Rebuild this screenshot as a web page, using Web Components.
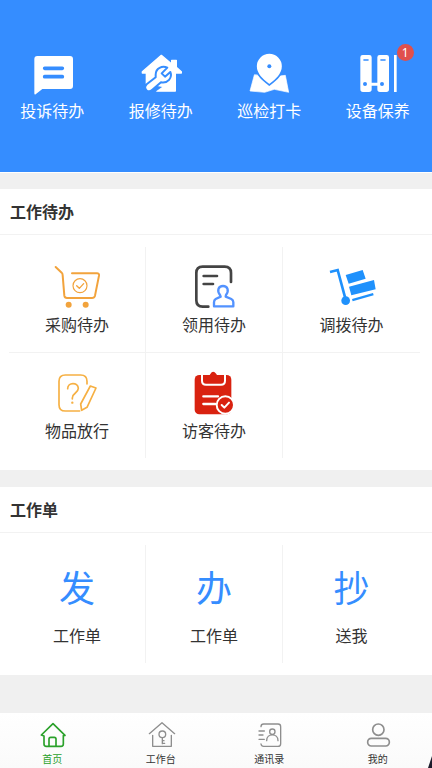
<!DOCTYPE html>
<html lang="zh-CN">
<head>
<meta charset="utf-8">
<meta name="viewport" content="width=device-width, initial-scale=1">
<title>工作待办</title>
<style>
  body { margin: 0; font-family: "Noto Sans CJK SC", "Liberation Sans", sans-serif; color: #333; }
  svg { display: block; width: 100%; height: 100%; fill: none; stroke-linecap: round; stroke-linejoin: round; }
</style>
</head>
<body>
<home-page>
  <hero-bar>
    <nav-tile>
      <svg slot="icon" viewBox="82 30 144 144"><path fill="#fff" d="M110 48h98q9 0 9 9v81q0 9-9 9h-83l-20 16q-4 2-4-3V57q0-9 9-9z"/><path stroke="#358dff" stroke-width="11" d="M132 85h53M132 110h53"/></svg>
      投诉待办
    </nav-tile>
    <nav-tile>
      <svg slot="icon" viewBox="0 0 144 144"><path fill="#fff" stroke="#fff" stroke-width="4" d="M73 16 16 65v4h12v54h87V69h18v-4l-15-13V31h-14v11z"/><path fill="#358dff" d="m16 131 8-30 52 10-20 15H16z"/><path fill="#fff" stroke="#fff" d="M82 108h32v15H60z"/><path stroke="#358dff" stroke-width="6" fill="#fff" d="M91 53C76 46 56 54 56 74v8L29 103c-12 12 4 29 16 17l27-23c20 4 35-14 28-31L84 80l-10-10z"/></svg>
      报修待办
    </nav-tile>
    <nav-tile>
      <svg slot="icon" viewBox="87 30 144 144"><path fill="#fff" stroke="#fff" stroke-width="2" d="m115 105-13 48 44 4 29-9 43 9-10-51-17 2-31 29-30-31z"/><path fill="#fff" stroke="#358dff" stroke-width="5" d="M160 39a40 40 0 0 1 40 40c0 25-21 41-40 56-19-15-40-31-40-56a40 40 0 0 1 40-40z"/><circle cx="160" cy="79" r="6" fill="#358dff"/></svg>
      巡检打卡
    </nav-tile>
    <nav-tile badge="1">
      <svg slot="icon" viewBox="413 30 144 144"><path fill="#fff" d="M439 45h20q7 0 7 7v76h17V52q0-7 7-7h21q7 0 7 7v96q0 8-8 8h-19q-8 0-8-8v-11h-17v11q0 8-8 8h-18q-8 0-8-8V52q0-7 7-7zM533 45h8v111h-8z"/><path stroke="#358dff" stroke-width="5" d="M443 60h12M494 60h12"/><path fill="#358dff" d="M440 132a6 6 0 1 0 12 0 6 6 0 1 0-12 0M491 132a6 6 0 1 0 12 0 6 6 0 1 0-12 0"/></svg>
      设备保养
    </nav-tile>
  </hero-bar>

  <card-section>
    <span slot="title">工作待办</span>
    <grid-tile>
      <svg slot="icon" viewBox="160 297 144 144"><path stroke="#f2a33c" stroke-width="6" d="m168 306 18 17q3 3 3 8l5 61q1 7 8 7h75q7 0 9-7l12-60q1-7-6-7h-75"/><circle cx="241" cy="362" r="21" stroke="#f2a33c" stroke-width="3.5"/><path stroke="#f2a33c" stroke-width="4" d="m231 362 8 8 13-14"/><g fill="#f2a33c"><circle cx="207" cy="419" r="9"/><circle cx="258" cy="419" r="9"/></g></svg>
      采购待办
    </grid-tile>
    <grid-tile>
      <svg slot="icon" viewBox="6 18 144 144"><path stroke="#444" stroke-width="8" d="M61 146H44q-19 0-19-19V45q0-19 19-19h66q19 0 19 19v27M47 54h40M47 78h28"/><path stroke="#5292ff" stroke-width="7" d="M96 111c-10-13-5-27 9-27s19 14 9 27l-1 5 17 7q6 3 6 10v12H78v-12q0-7 5-10l15-7z"/></svg>
      领用待办
    </grid-tile>
    <grid-tile>
      <svg slot="icon" viewBox="334 72 144 144"><g fill="#1f91fc"><path d="m387 105 51-15 9 26-51 15zM397 140l75-20 5 28-73 18zM406 177l63-18 2 7-63 18z"/><circle cx="387" cy="182" r="13"/></g><path stroke="#1f91fc" stroke-width="8" stroke-linecap="butt" stroke-linejoin="miter" d="m340 96 23-6 23 85"/></svg>
      调拨待办
    </grid-tile>
    <grid-tile>
      <svg slot="icon" viewBox="160 75 144 144"><g stroke="#f6b043" stroke-width="5"><path d="M262 117v-8q0-19-19-19h-46q-19 0-19 19v70q0 19 19 19h43"/><path d="m272 123 17 6-27 58-16 9-3-19z"/><path d="M204 131c0-20 31-20 32-1 0 15-18 13-18 29v3"/></g><circle cx="218" cy="173" r="3.5" fill="#f6b043"/></svg>
      物品放行
    </grid-tile>
    <grid-tile>
      <svg slot="icon" viewBox="571 75 144 144"><rect x="585" y="90" width="110" height="118" rx="14" fill="#d92210"/><path stroke="#fff" stroke-width="6" stroke-linecap="butt" d="M607 88v19q0 12 12 12h45q12 0 12-12V88"/><path fill="#d92210" d="M613 91h14q4 0 5-4 8-14 18 0 1 4 5 4h15v14q0 7-7 7h-43q-7 0-7-7z"/><path stroke="#fff" stroke-width="7" d="M611 154h44M611 177h36"/><circle cx="677" cy="180" r="26" fill="#d92210" stroke="#fff" stroke-width="6"/><path stroke="#fff" stroke-width="6" d="m666 180 8 8 14-15"/></svg>
      访客待办
    </grid-tile>
    <grid-tile empty></grid-tile>
  </card-section>

  <card-section>
    <span slot="title">工作单</span>
    <grid-tile glyph><span slot="icon">发</span>工作单</grid-tile>
    <grid-tile glyph><span slot="icon">办</span>工作单</grid-tile>
    <grid-tile glyph><span slot="icon">抄</span>送我</grid-tile>
  </card-section>

  <tab-bar>
    <tab-item active>
      <svg slot="icon" viewBox="109 60 90 90"><g stroke="#2ba12b" stroke-width="5"><path d="m122 105 35-34 36 35-5 1v25q0 7-7 7h-44q-7 0-7-7v-24z"/><path d="M145 138v-21q0-5 5-5h11q5 0 5 5v21"/></g></svg>
      首页
    </tab-item>
    <tab-item>
      <svg slot="icon" viewBox="435 60 90 90"><g stroke="#8e8e8e" stroke-width="4"><path d="m445 101 38-33 38 33M455 106v33h56v-33"/><circle cx="484" cy="103" r="10"/><path d="M484 113v18M484 122h5M484 130h7"/></g></svg>
      工作台
    </tab-item>
    <tab-item>
      <svg slot="icon" viewBox="114 60 90 90"><g stroke="#8e8e8e" stroke-width="4"><path d="M135 80q0-8 8-8h43q8 0 8 8v51q0 8-8 8h-43q-7 0-8-7M129 93h16M129 105h12M129 118h16"/><circle cx="169" cy="95" r="8"/><path d="M152 122c0-23 34-23 34 0"/></g></svg>
      通讯录
    </tab-item>
    <tab-item>
      <svg slot="icon" viewBox="440 60 90 90"><g stroke="#8e8e8e" stroke-width="5"><circle cx="486" cy="89" r="17"/><rect x="454" y="115" width="65" height="23" rx="11"/></g></svg>
      我的
    </tab-item>
  </tab-bar>
</home-page>

<script>
  const define = (name, html, setup) => {
    const template = document.createElement('template');
    template.innerHTML = html;
    customElements.define(name, class extends HTMLElement {
      constructor() {
        super();
        this.attachShadow({ mode: 'open' }).append(template.content.cloneNode(true));
      }
      connectedCallback() {
        if (setup) setup(this, this.shadowRoot);
      }
    });
  };

  const buttonReset = `
    button { display: flex; flex-direction: column; align-items: center; width: 100%; margin: 0; padding: 0;
      border: 0; background: none; font: inherit; color: inherit; cursor: pointer; white-space: nowrap; }`;

  define('home-page', `
    <style>
      :host { display: flex; flex-direction: column; gap: 17px; min-height: 100vh; background: #f0f0f0; }
      ::slotted(tab-bar) { margin-top: auto; }
    </style>
    <slot></slot>`);

  define('hero-bar', `
    <style>
      :host { display: block; padding: 50px 0; background: #358dff; box-shadow: 0 1px #fff; color: #fff; }
      nav { display: grid; grid-template-columns: repeat(4, 1fr); margin-left: -2px; }
    </style>
    <nav><slot></slot></nav>`);

  define('nav-tile', `
    <style>
      :host { display: block; font-size: 16px; line-height: 24px; }
      ${buttonReset}
      .icon { position: relative; width: 48px; height: 48px; }
      .badge { position: absolute; top: -6px; right: -12px; width: 17px; height: 17px; border-radius: 50%;
        background: #e0504c; font: 12px/17px "Noto Sans", sans-serif; text-align: center; }
    </style>
    <button type="button"><span class="icon"><slot name="icon"></slot></span><span><slot></slot></span></button>`,
    (host, root) => {
      if (!host.hasAttribute('badge') || root.querySelector('.badge')) return;
      const badge = document.createElement('span');
      badge.className = 'badge';
      badge.textContent = host.getAttribute('badge');
      root.querySelector('.icon').append(badge);
    });

  define('card-section', `
    <style>
      :host { display: block; background: #fff; }
      h2 { margin: 0; padding: 10px 10px 11px; border-bottom: 1px solid #f2f2f2; font-size: 16px; line-height: 24px; font-weight: 700; }
      .grid { display: grid; grid-template-columns: repeat(3, 1fr); padding: 12px 12px 12px 9px; }
      ::slotted(grid-tile:not(:nth-of-type(3n))) { border-right: 1px solid #f2f2f2; }
      ::slotted(grid-tile:nth-of-type(n + 4)) { border-top: 1px solid #f2f2f2; }
    </style>
    <h2><slot name="title"></slot></h2>
    <div class="grid"><slot></slot></div>`);

  define('grid-tile', `
    <style>
      :host { display: block; padding: 17px 0 16px; font-size: 16px; line-height: 24px; }
      ${buttonReset}
      .icon { width: 48px; height: 48px; font-size: 36px; line-height: 48px; color: #358dff; text-align: center; }
      :host([glyph]) button { gap: 13px; }
    </style>
    <button type="button"><span class="icon"><slot name="icon"></slot></span><span><slot></slot></span></button>`,
    (host, root) => { if (host.hasAttribute('empty')) root.querySelector('button')?.remove(); });

  define('tab-bar', `
    <style>
      :host { display: block; position: relative; background: linear-gradient(#fff, #fafafa); padding: 7px 0 1px; }
      nav { display: grid; grid-template-columns: repeat(4, 1fr); margin-left: -2px; }
      :host::after { content: ""; position: absolute; right: 0; bottom: 0; width: 4px; height: 12px;
        background: #1c1c2c; clip-path: polygon(100% 0, 100% 100%, 0 100%); }
    </style>
    <nav><slot></slot></nav>`);

  define('tab-item', `
    <style>
      :host { display: block; font-size: 10px; line-height: 16px; color: #333; }
      :host([active]) { color: #2ba12b; }
      ${buttonReset}
      button { gap: 1px; }
      .icon { width: 30px; height: 30px; }
    </style>
    <button type="button"><span class="icon"><slot name="icon"></slot></span><span><slot></slot></span></button>`);
</script>
</body>
</html>
